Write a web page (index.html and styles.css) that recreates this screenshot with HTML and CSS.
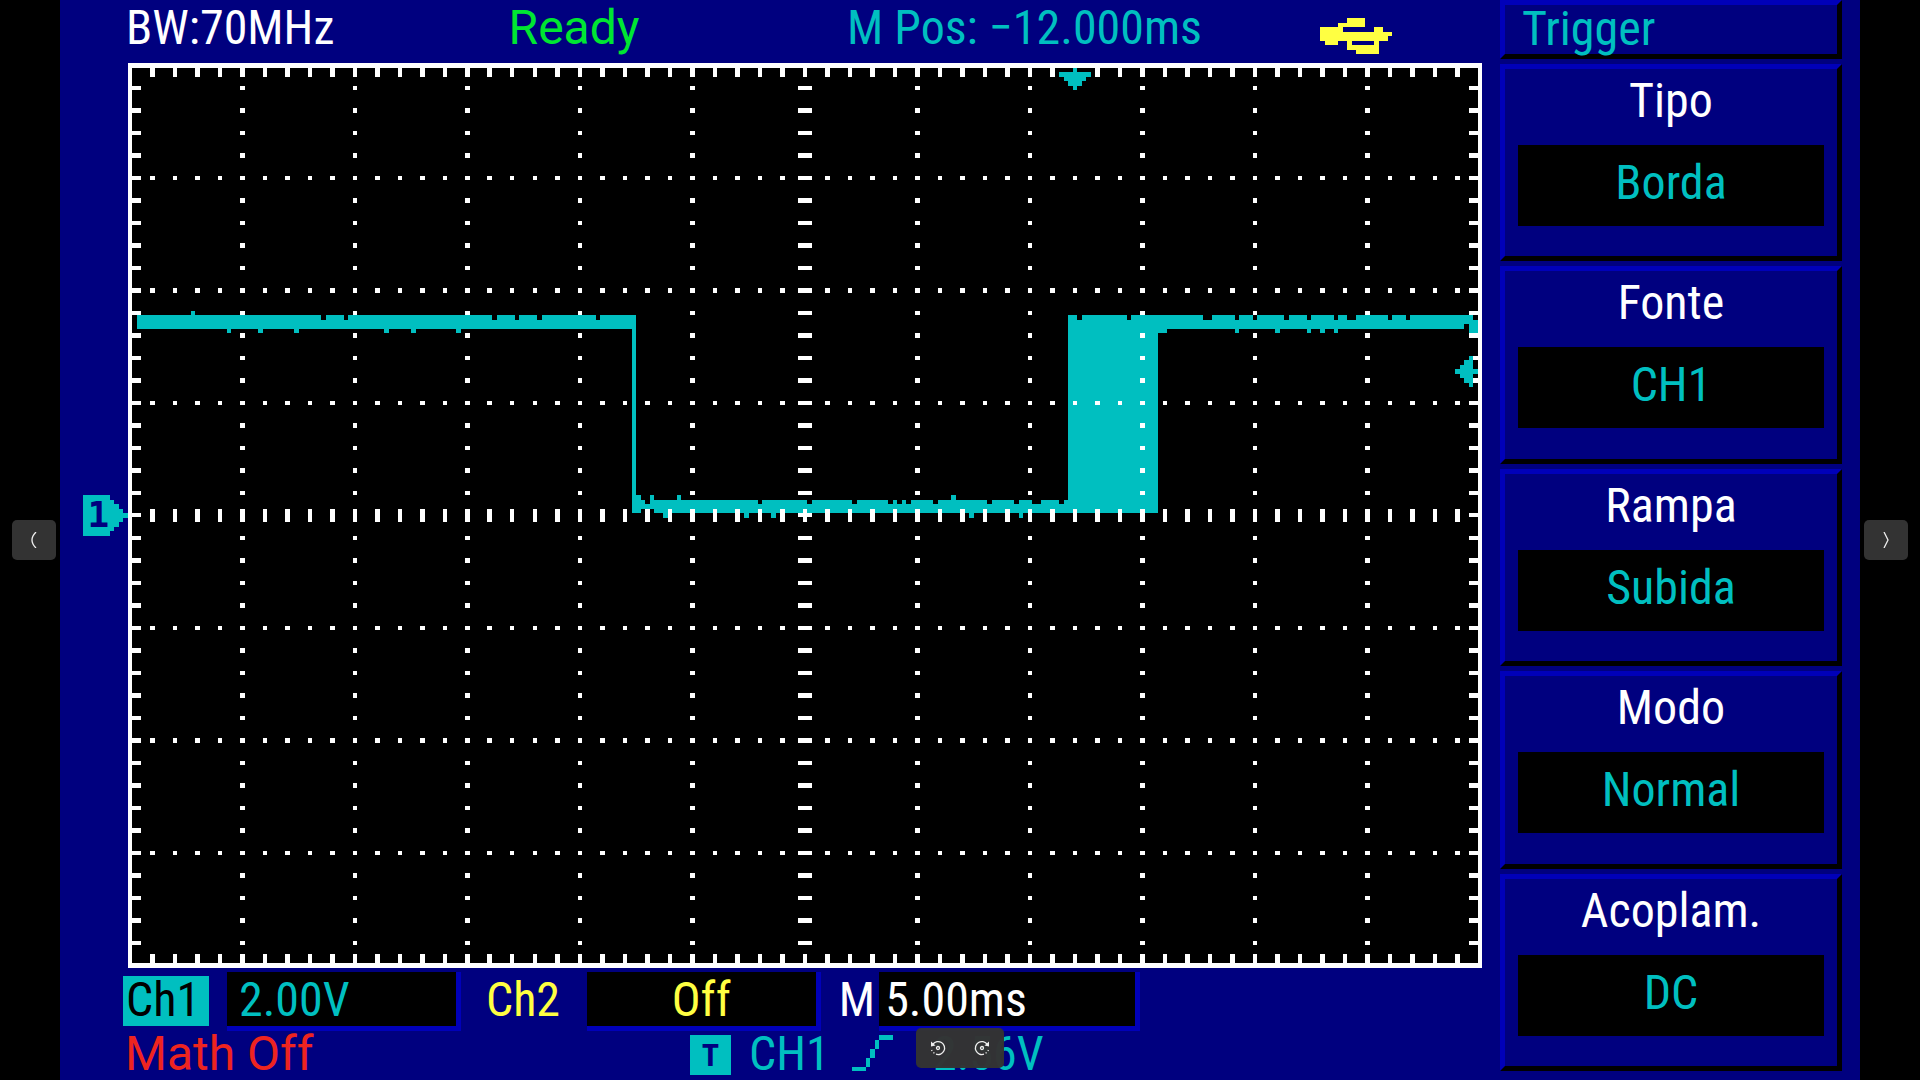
FILE: index.html
```html
<!DOCTYPE html>
<html lang="pt">
<head>
<meta charset="utf-8">
<title>Trigger</title>
<link rel="stylesheet" href="styles.css">
</head>
<body>
<main class="screen">
  <section class="scope">
    <header class="topbar">
      <span class="white">BW:70MHz</span>
      <span class="ready">Ready</span>
      <span>M Pos: −12.000ms</span>
      <svg class="usb" viewBox="0 0 16 8" role="img" aria-label="USB">
        <path d="M6 0h4v2H5v1h7V2h2v1h2v1h-1v1h-2v2h0v1H8V7H6V5H4v1H1V5H0V2h4V1h2z M7 5h5v1H7z" fill-rule="evenodd"/>
      </svg>
    </header>

    <svg class="plot" viewBox="0 14 316 201" role="img" aria-label="CH1">
      <rect class="ink-black" x="15" y="14" width="301" height="201"/>
      <!-- channel 1 trace -->
      <path class="ink-cyan" d="M17 70H128V73H17z M127 70h1v44h-1z M29 69h1v1h-1z M37 73h1v1h-1z M44 73h1v1h-1z M52 73h1v1h-1z M72 73h1v1h-1z M78 73h1v1h-1z M88 73h1v1h-1z
        M127 111H225V114H127z M127 110h2v1h-2z M131 110h1v1h-1z M137 110h1v1h-1z M198 110h1v1h-1z M134 114h1v1h-1z M152 114h1v1h-1z M158 114h1v1h-1z M202 114h1v1h-1z M213 114h1v1h-1z
        M224 70h20v44h-20z M244 70H314V73H244z M314 71h1v2h-1z M313 73h2v1h-2z M244 73h2v1h-2z M261 73h1v1h-1z M270 73h1v1h-1z M277 73h1v1h-1z M280 73h1v1h-1z M283 73h1v1h-1z"/>
      <path class="ink-black" d="M58 70h1v1h-1z M63 70h1v1h-1z M96 70h1v1h-1z M101 70h1v1h-1z M106 70h1v1h-1z M119 70h1v1h-1z
        M130 111h1v1h-1z M155 111h1v1h-1z M166 111h1v1h-1z M176 111h1v1h-1z M184 111h1v1h-1z M186 111h1v1h-1z M188 111h1v1h-1z M194 111h1v1h-1z M206 111h1v1h-1z M212 111h1v1h-1z M216 111h2v1h-2z M222 111h1v1h-1z M129 113h3v1h-3z
        M226 70h1v1h-1z M237 70h1v1h-1z M254 70h2v1h-2z M261 70h1v1h-1z M265 70h1v1h-1z M272 70h1v1h-1z M277 70h1v1h-1z M283 70h1v1h-1z M286 70h2v1h-2z M295 70h1v1h-1z M299 70h1v1h-1z M312 72h1v1h-1z"/>
      <!-- graticule -->
      <rect class="frame" x="15.5" y="14.5" width="300" height="200"/>
      <g class="dots">
        <path d="M40.5 19V210M65.5 19V210M90.5 19V210M115.5 19V210M140.5 19V210M190.5 19V210M215.5 19V210M240.5 19V210M265.5 19V210M290.5 19V210"/>
        <path d="M20 39.5H311M20 64.5H311M20 89.5H311M20 139.5H311M20 164.5H311M20 189.5H311"/>
        <path class="w2" d="M20 16H311M20 213H311M17 19V210M314 19V210"/>
        <path class="w3" d="M20 114.5H311M165.5 19V210"/>
      </g>
      <!-- trigger position, trigger level and channel ground markers -->
      <path class="ink-cyan" d="M225 15h1v1h3v1h-1v1h-1v1h-1v1h-1v-1h-1v-1h-1v-1h-1v-1h3z"/>
      <path class="ink-cyan" d="M313 79h1v3h1v1h-1v3h-1v-1h-1v-1h-1v-1h-1v-1h1v-1h1v-1h1z"/>
      <path class="ink-cyan" d="M5 110h6v1h1v1h1v1h1v1h1v1h-1v1h-1v1h-1v1h-1v1H5z"/>
      <text class="ground" x="8.5" y="117">1</text>
    </svg>

    <div class="channels">
      <span class="badge">Ch1</span>
      <span class="field">2.00V</span>
      <span class="label yellow">Ch2</span>
      <span class="field centered yellow">Off</span>
      <span class="timebase white">M</span>
      <span class="field tight white">5.00ms</span>
    </div>

    <footer class="status">
      <span class="math">Math Off</span>
      <span class="tbadge">T</span>
      <span>CH1</span>
      <svg class="slope" viewBox="0 0 9 8" role="img" aria-label="Subida">
        <path d="M6 0h3v1H6v2H5v2H4v2H3v1H0V7h3V5h1V3h1V1h1z"/>
      </svg>
      <span>2.56V</span>
    </footer>
  </section>

  <aside class="menu">
    <h1 class="menu-title">Trigger</h1>
    <button class="softkey"><span class="name">Tipo</span><span class="value">Borda</span></button>
    <button class="softkey"><span class="name">Fonte</span><span class="value">CH1</span></button>
    <button class="softkey"><span class="name">Rampa</span><span class="value">Subida</span></button>
    <button class="softkey"><span class="name">Modo</span><span class="value">Normal</span></button>
    <button class="softkey"><span class="name">Acoplam.</span><span class="value">DC</span></button>
  </aside>
</main>

<button class="nav prev" aria-label="Anterior"><svg viewBox="0 0 16 16"><path d="M10 0Q2 8 10 16"/></svg></button>
<button class="nav next" aria-label="Próxima"><svg viewBox="0 0 16 16"><path d="M6 0L10 8L6 16"/></svg></button>
<div class="rotate">
  <button aria-label="Girar à esquerda"><svg viewBox="0 0 16 16"><path d="M3 4A6.5 6.5 0 1 1 6 14.2M4.4 13.3L3.4 12.5M2 11L1.6 10"/><circle cx="8" cy="8" r="1.5"/><path class="head" d="M1 1.5V6.5L5.5 5.5z"/></svg></button>
  <button aria-label="Girar à direita"><svg viewBox="0 0 16 16"><path d="M13 4A6.5 6.5 0 1 0 10 14.2M11.6 13.3L12.6 12.5M14 11L14.4 10"/><circle cx="8" cy="8" r="1.5"/><path class="head" d="M15 1.5V6.5L10.5 5.5z"/></svg></button>
</div>
</body>
</html>
```
FILE: styles.css
```css
:root {
  --navy: #00007f;
  --blue: #0000b9;
  --cyan: #00bfc0;
  --yellow: #ffff42;
}

* { box-sizing: border-box; }

body {
  margin: 0;
  background: #000;
  color: var(--cyan);
  font: 48px/48px "Roboto Condensed", Roboto, sans-serif;
}

button {
  font: inherit;
  color: inherit;
  border: 0;
  padding: 0;
  margin: 0;
}

.white { color: #fff; }
.yellow { color: var(--yellow); }

.screen {
  display: grid;
  grid-template-columns: minmax(0, 1fr) 342px;
  gap: 18px;
  min-height: 100vh;
  margin: 0 60px;
  padding-right: 18px;
  background: var(--navy);
}

.scope {
  display: flex;
  flex-direction: column;
  white-space: nowrap;
}

/* top bar */
.topbar {
  display: grid;
  grid-template-columns: 382fr 338fr 472fr 162fr;
  align-items: start;
  height: 63px;
  padding: 4px 0 0 66px;
}
.ready {
  color: #00e632;
  font-family: Roboto, sans-serif;
}
.usb {
  width: 72px;
  height: 36px;
  margin-top: 14px;
  fill: var(--yellow);
  shape-rendering: crispEdges;
}

/* graticule and trace */
.plot {
  display: block;
  width: 100%;
  shape-rendering: crispEdges;
}
.ink-black { fill: #000; }
.ink-cyan { fill: var(--cyan); }
.frame { fill: none; stroke: #fff; }
.dots { fill: none; stroke: #fff; stroke-width: 1; stroke-dasharray: 1 4; }
.w2 { stroke-width: 2; }
.w3 { stroke-width: 3; }
.ground {
  font: bold 8px "DejaVu Sans Mono", monospace;
  text-anchor: middle;
  fill: var(--navy);
}

/* channel row */
.channels {
  display: grid;
  grid-template-columns: 86fr 234fr 90fr 234fr 22fr 261fr 324fr;
  column-gap: 18px;
  margin-top: 4px;
  padding-left: 63px;
  line-height: 56px;
}
.badge {
  align-self: start;
  height: 50px;
  margin-top: 4px;
  padding-left: 3px;
  line-height: 48px;
  background: var(--cyan);
  color: #000;
}
.field {
  height: 59px;
  padding-left: 12px;
  background: #000;
  border: solid var(--blue);
  border-width: 0 5px 5px 0;
}
.tight { padding-left: 6px; }
.centered { padding: 0; text-align: center; }
.label { padding-left: 7px; }
.timebase { justify-self: end; margin-right: -14px; }

/* status row */
.status {
  display: grid;
  grid-template-columns: 562fr 59fr 103fr 81fr 549fr;
  align-items: start;
  height: 45px;
  padding-left: 68px;
  line-height: 46px;
}
.math {
  margin-left: -3px;
  color: #ee2420;
  font-family: Roboto, sans-serif;
}
.tbadge {
  width: 41px;
  height: 40px;
  margin-top: 4px;
  background: var(--cyan);
  color: var(--navy);
  font-size: 32px;
  font-weight: bold;
  line-height: 40px;
  text-align: center;
}
.slope {
  width: 41px;
  height: 36px;
  margin-top: 4px;
  fill: var(--cyan);
  shape-rendering: crispEdges;
}

/* soft-key menu */
.menu {
  display: flex;
  flex-direction: column;
  gap: 5px;
  padding-bottom: 9px;
}
.menu-title,
.softkey {
  background: var(--navy);
  border: 5px solid #000;
  border-top-color: var(--blue);
  border-left-color: var(--blue);
}
.menu-title {
  height: 59px;
  margin: 0;
  padding: 0 0 0 17px;
  font-size: 48px;
  font-weight: normal;
}
.softkey {
  flex: 1;
  display: flex;
  flex-direction: column;
  justify-content: flex-start;
  gap: 20px;
  padding: 8px 13px 0;
}
.name { color: #fff; }
.value {
  height: 81px;
  background: #000;
  line-height: 75px;
}

/* viewer controls over the picture */
.nav,
.rotate {
  position: fixed;
  height: 40px;
  border-radius: 5px;
  background: #333;
}
.nav { top: calc(50vh - 20px); width: 44px; }
.prev { left: 12px; }
.next { right: 12px; }
.rotate {
  left: calc(50vw - 44px);
  bottom: 12px;
  display: flex;
  width: 88px;
  background: rgb(51 51 51 / 98%);
}
.rotate button { flex: 1; background: none; }
.nav,
.rotate button {
  display: flex;
  align-items: center;
  justify-content: center;
}
.nav svg,
.rotate svg {
  flex: none;
  width: 16px;
  height: 16px;
  fill: none;
  stroke: #eee;
  stroke-width: 1.3;
}
.rotate .head { fill: #eee; stroke: none; }
```
